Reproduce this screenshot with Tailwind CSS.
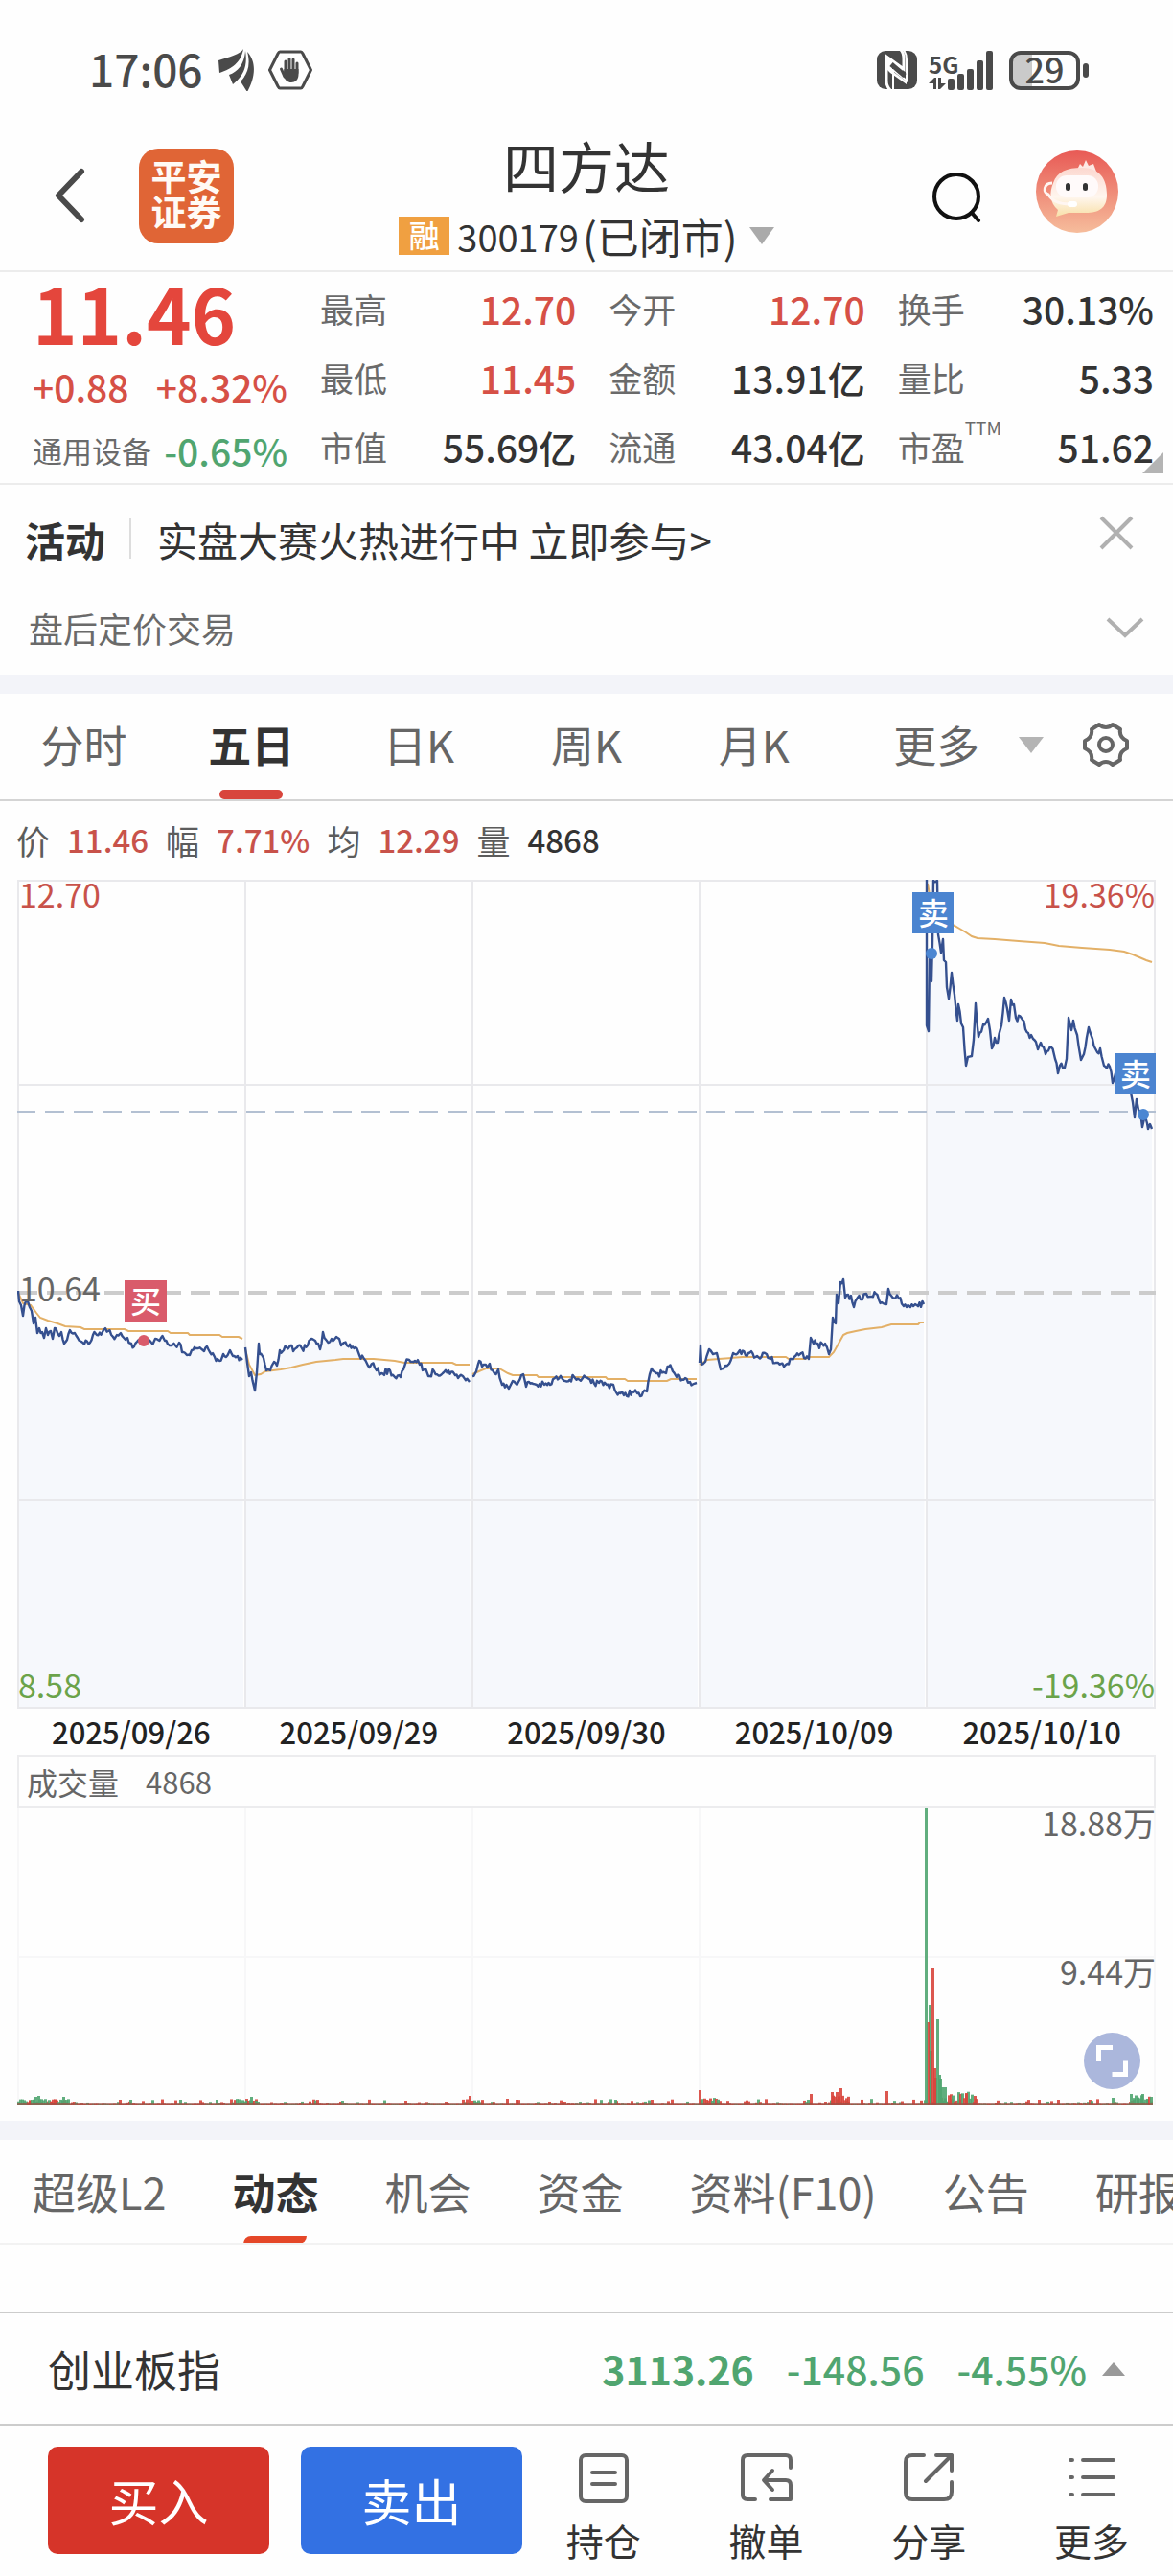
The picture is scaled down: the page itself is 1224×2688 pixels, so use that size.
<!DOCTYPE html>
<html lang="zh-CN">
<head>
    <meta charset="UTF-8">
    <meta name="viewport" content="width=device-width, initial-scale=1">
    <title>四方达 300179</title>
    <script src="https://cdn.jsdelivr.net/npm/@tailwindcss/browser@4"></script>
</head>
<body class="bg-[#fefefe] text-[#333333] font-['Noto_Sans_CJK_SC',sans-serif] overflow-x-hidden">
<div class="flex flex-col w-full">

    <!--status bar-->
    <div class="h-[130px] pt-4 pl-[93px] pr-[88px] flex items-center justify-between text-[#4a4a4a]">
        <div class="flex items-center">
            <span class="text-[46px] leading-[40px] font-medium pb-1">17:06</span>
            <svg class="ml-4 w-[38px] h-[44px]" viewBox="0 0 38 44" fill="currentColor">
                <path d="M26 0C24 5 10 9 0 12L1 25C10 22 23 17 26 0Z"/>
                <path d="M28 2C27 16 20 24 11 27L15 37C25 29 31 19 28 2Z"/>
                <path d="M30 3C34 17 30 27 23 34L30 45C36 34 42 16 30 3Z"/>
            </svg>
            <svg class="ml-3.5 w-[46px] h-[42px]" viewBox="0 0 46 42" fill="none" stroke="currentColor" stroke-linecap="round" stroke-linejoin="round">
                <path d="M12 2H34Q35 2 36 4L44 20Q45 21 44 22L36 38Q35 40 34 40H12Q11 40 10 38L2 22Q1 21 2 20L10 4Q11 2 12 2Z" stroke-width="3"/>
                <path d="M18 22V12M22 22V9.500M26 22V10M30 24V14M13.500 20L17 28" stroke-width="3"/>
                <path d="M16.500 20H31.500V26C31.500 31 28 34 24 34C20 34 18 32 15.500 27Z" fill="currentColor" stroke="none"/>
            </svg>
        </div>
        <div class="flex items-center">
            <svg class="w-[42px] h-[42px]" viewBox="0 0 42 42" fill="none" stroke="#fefefe" stroke-width="3">
                <rect x="0" y="1" width="42" height="40" rx="9" fill="#4a4a4a" stroke="none"/>
                <path d="M14 42C11 39 10 36 10 32V7L28 20V10C28 5 27 2 25 0"/>
                <path d="M17 42V20M17 21L31 32V10C31 6 30 3 28 0" stroke-width="2"/>
                <path d="M10 6L27 18V22L16 14V22L31 33V36L14 24L10 20Z" fill="#fefefe" stroke="none"/>
                <path d="M15 15L29 27" stroke="#4a4a4a" stroke-width="5"/>
            </svg>
            <div class="ml-3 flex items-end">
                <div class="flex flex-col w-[20px]">
                    <span class="text-[24px] leading-[26px] font-bold">5G</span>
                    <svg class="w-[18px] h-[14px]" viewBox="0 0 18 14" fill="#4a4a4a">
                        <path d="M0 7L6 1H8V13H5V7ZM10 1H13V7H18L12 13H10Z"/>
                    </svg>
                </div>
                <svg class="w-[48px] h-[42px]" viewBox="0 0 48 42" fill="#4a4a4a">
                    <rect x="0" y="30" width="7" height="12" rx="2"/>
                    <rect x="10" y="25" width="7" height="17" rx="2"/>
                    <rect x="20" y="20" width="7" height="22" rx="2"/>
                    <rect x="30" y="11" width="7" height="31" rx="2"/>
                    <rect x="40" y="1" width="7" height="41" rx="2"/>
                </svg>
            </div>
            <div class="ml-4 flex items-center gap-[3px]">
                <div class="w-[74px] h-[41px] rounded-[12px] border-4 border-[#4a4a4a] bg-linear-to-r from-[#cacaca] from-33% to-transparent to-33% bg-origin-border flex items-center justify-center">
                    <span class="text-[36px] leading-[30px] font-medium pb-1">29</span>
                </div>
                <div class="w-[6px] h-[15px] rounded-full bg-[#4a4a4a]"></div>
            </div>
        </div>
    </div>

    <!--header-->
    <header class="h-[154px] border-b-2 border-[#ececec] flex items-center">
        <div class="w-[280px] pl-[56px] pb-1 flex items-center gap-[56px]">
            <button aria-label="返回" class="cursor-pointer">
                <svg class="w-[33px] h-[58px]" viewBox="0 0 33 58" fill="none" stroke="#4a4a4a" stroke-width="6" stroke-linecap="round" stroke-linejoin="round">
                    <path d="M29 4L5 29L29 54"/>
                </svg>
            </button>
            <div class="w-[99px] h-[99px] rounded-[20px] bg-[#e06536] text-[#fffaf5] font-bold text-[37px] leading-[37px] flex flex-col items-center justify-center pb-1">
                <span>平安</span>
                <span>证券</span>
            </div>
        </div>
        <div class="flex-1 flex flex-col items-center">
            <h1 class="text-[58px] leading-[80px]">四方达</h1>
            <button class="h-[68px] flex items-center cursor-pointer">
                <span class="w-[53px] h-[40px] mr-2 bg-[#f0a041] text-white text-[32px] leading-[36px] font-medium">融</span>
                <span class="text-[38px]">300179</span>
                <span class="text-[44px] ml-1">(已闭市)</span>
                <svg class="ml-3 w-[26px] h-[18px]" viewBox="0 0 26 18"><path d="M0 0H26L13 18Z" fill="#aaaaaa"/></svg>
            </button>
        </div>
        <div class="w-[280px] pr-[57px] pb-1 flex items-center justify-end gap-[57px]">
            <button aria-label="搜索" class="cursor-pointer">
                <svg class="w-[52px] h-[56px]" viewBox="0 0 52 56" fill="none" stroke="#111111" stroke-width="4" stroke-linecap="round">
                    <circle cx="26" cy="29" r="23"/>
                    <path d="M42 46L49 54"/>
                </svg>
            </button>
            <button aria-label="客服" class="cursor-pointer mb-2">
                <svg class="w-[86px] h-[86px]" viewBox="0 0 86 86">
                    <defs>
                        <linearGradient id="avatar-bg" x1="0" y1="0" x2="0" y2="1">
                            <stop offset="0" stop-color="#e85a55"/>
                            <stop offset="1" stop-color="#f6bd9c"/>
                        </linearGradient>
                        <linearGradient id="avatar-face" x1="0" y1="0" x2="0" y2="1">
                            <stop offset="0" stop-color="#fcd8d0"/>
                            <stop offset="0.600" stop-color="#fff6ee"/>
                            <stop offset="1" stop-color="#f8e0a8"/>
                        </linearGradient>
                    </defs>
                    <circle cx="43" cy="43" r="43" fill="url(#avatar-bg)"/>
                    <path d="M43 20L46 14L49 17L52 10L55 16L60 14L63 22Z" fill="#fde9e4"/>
                    <path d="M18 34C22 22 32 18 48 18C66 18 74 29 74 46C74 60 66 65 52 65H34L21 69L23 62C14 54 14 44 18 34Z" fill="url(#avatar-face)"/>
                    <rect x="21" y="26" width="44" height="23" rx="11" fill="#fffafa"/>
                    <rect x="31" y="34" width="5" height="8" rx="2.500" fill="#333"/>
                    <rect x="49" y="34" width="5" height="8" rx="2.500" fill="#333"/>
                    <path d="M17 34C8 34 7 44 13 46C17 53 26 56 36 56" fill="none" stroke="#fff6f2" stroke-width="3"/>
                    <rect x="33" y="53" width="10" height="6" rx="3" fill="#fff"/>
                </svg>
            </button>
        </div>
    </header>

    <!--quote-->
    <section class="relative h-[222px] pt-[2px] px-5 border-b-2 border-[#ececec] grid grid-cols-[280px_1fr_1fr_1fr] gap-x-[34px] text-[39px] font-medium">
        <div class="pl-[14px] flex flex-col">
            <div class="h-[80px] flex items-center text-[79px] leading-[80px] font-bold text-[#e4463c]">11.46</div>
            <div class="h-[74px] flex items-center justify-between text-[#d65046]">
                <span>+0.88</span>
                <span>+8.32%</span>
            </div>
            <div class="h-[60px] flex items-center justify-between">
                <span class="text-[31px] font-normal text-[#6a6a6a]">通用设备</span>
                <span class="text-[#50a570]">-0.65%</span>
            </div>
        </div>
        <dl class="flex flex-col">
            <div class="h-[72px] flex items-center justify-between"><dt class="text-[35px] font-normal text-[#6a6a6a]">最高</dt><dd class="text-[#d65046]">12.70</dd></div>
            <div class="h-[72px] flex items-center justify-between"><dt class="text-[35px] font-normal text-[#6a6a6a]">最低</dt><dd class="text-[#d65046]">11.45</dd></div>
            <div class="h-[72px] flex items-center justify-between"><dt class="text-[35px] font-normal text-[#6a6a6a]">市值</dt><dd>55.69亿</dd></div>
        </dl>
        <dl class="flex flex-col">
            <div class="h-[72px] flex items-center justify-between"><dt class="text-[35px] font-normal text-[#6a6a6a]">今开</dt><dd class="text-[#d65046]">12.70</dd></div>
            <div class="h-[72px] flex items-center justify-between"><dt class="text-[35px] font-normal text-[#6a6a6a]">金额</dt><dd>13.91亿</dd></div>
            <div class="h-[72px] flex items-center justify-between"><dt class="text-[35px] font-normal text-[#6a6a6a]">流通</dt><dd>43.04亿</dd></div>
        </dl>
        <dl class="flex flex-col">
            <div class="h-[72px] flex items-center justify-between"><dt class="text-[35px] font-normal text-[#6a6a6a]">换手</dt><dd>30.13%</dd></div>
            <div class="h-[72px] flex items-center justify-between"><dt class="text-[35px] font-normal text-[#6a6a6a]">量比</dt><dd>5.33</dd></div>
            <div class="h-[72px] flex items-center justify-between">
                <dt class="flex items-start text-[35px] font-normal text-[#6a6a6a]">市盈<span class="text-[19px] leading-[12px]">TTM</span></dt>
                <dd>51.62</dd>
            </div>
        </dl>
        <svg class="absolute right-[10px] bottom-[10px] w-[22px] h-[22px]" viewBox="0 0 22 22"><path d="M22 0V22H0Z" fill="#b4b4b4"/></svg>
    </section>

    <!--activity-->
    <div class="h-[104px] pt-2 pl-[26px] pr-[40px] flex items-center text-[42px]">
        <span class="font-bold">活动</span>
        <span class="w-[2px] h-[42px] ml-[25px] mr-[27px] bg-[#dddddd]"></span>
        <a href="#" class="flex-1">实盘大赛火热进行中 立即参与&gt;</a>
        <button aria-label="关闭" class="mb-3 cursor-pointer">
            <svg class="w-[38px] h-[38px]" viewBox="0 0 38 38" stroke="#b0b0b0" stroke-width="4"><path d="M3 3L35 35M35 3L3 35"/></svg>
        </button>
    </div>
    <button class="h-[94px] pb-1 pl-[30px] pr-[30px] flex items-center justify-between cursor-pointer">
        <span class="text-[36px] text-[#6a6a6a]">盘后定价交易</span>
        <svg class="w-[40px] h-[24px]" viewBox="0 0 40 24" fill="none" stroke="#b0b0b0" stroke-width="4"><path d="M2 3L20 20L38 3"/></svg>
    </button>
    <div class="h-5 bg-[#f3f4f9]"></div>

    <!--period tabs-->
    <nav class="h-[112px] border-b-2 border-[#d4d4d4] grid grid-cols-7 text-[45px] text-[#666666]">
        <button class="pb-1 cursor-pointer">分时</button>
        <button class="relative pb-1 font-bold text-[#333333] cursor-pointer">五日
            <span class="absolute bottom-0 left-1/2 -translate-x-1/2 w-[66px] h-[10px] rounded-full bg-[#d8453c]"></span>
        </button>
        <button class="pb-1 cursor-pointer">日K</button>
        <button class="pb-1 cursor-pointer">周K</button>
        <button class="pb-1 cursor-pointer">月K</button>
        <div class="col-span-2 pb-1 pl-[58px] pr-[46px] flex items-center justify-between">
            <button class="cursor-pointer">更多</button>
            <svg class="w-[26px] h-[17px]" viewBox="0 0 26 17"><path d="M0 0H26L13 17Z" fill="#b4b4b4"/></svg>
            <button aria-label="设置" class="cursor-pointer">
                <svg class="w-[48px] h-[48px]" viewBox="0 0 48 48" fill="none" stroke="#666666" stroke-width="4" stroke-linejoin="round">
                    <path d="M17 3C21 7 27 7 31 3L39 8C38 14 41 18 46 20V28C41 30 38 34 39 40L31 45C27 41 21 41 17 45L9 40C10 34 7 30 2 28V20C7 18 10 14 9 8Z"/>
                    <circle cx="24" cy="24" r="7"/>
                </svg>
            </button>
        </div>
    </nav>

    <!--cursor values-->
    <div class="h-[82px] pl-[17px] flex items-center gap-[18px] text-[33px] font-medium text-[#c8524a]">
        <span class="text-[35px] font-normal text-[#5c5c5c]">价</span><span>11.46</span>
        <span class="text-[35px] font-normal text-[#5c5c5c]">幅</span><span>7.71%</span>
        <span class="text-[35px] font-normal text-[#5c5c5c]">均</span><span>12.29</span>
        <span class="text-[35px] font-normal text-[#5c5c5c]">量</span><span class="text-[#333333]">4868</span>
    </div>

    <!--price chart-->
    <div class="relative mx-[18px] text-[34px] leading-[30px]">
        <svg id="price-chart" class="block w-full" viewBox="18 918 1188 865" fill="none">
            <g id="price-fill" fill="#f6f8fc"></g>
            <path d="M19 918V1783M256 918V1783M493 918V1783M730 918V1783M967 918V1783M1205 918V1783M18 919H1206M18 1132H1206M18 1565H1206M18 1782H1206" stroke="#e9e9ec" stroke-width="2"/>
            <path d="M19 1349H1206" stroke="#cccccc" stroke-width="4" stroke-dasharray="20 10"/>
            <path d="M17 1160H1206" stroke="#b3c0d2" stroke-width="2" stroke-dasharray="20 10"/>
            <g id="price-avg" stroke="#e3b067" stroke-width="2"></g>
            <g id="price-line" stroke="#35508f" stroke-width="2.400" stroke-linejoin="round"></g>
            <circle cx="150" cy="1399" r="6" fill="#d95b6b"/>
            <circle cx="972" cy="995" r="6" fill="#4b86d2"/>
            <circle cx="1193" cy="1163" r="6" fill="#4b86d2"/>
            <rect x="130" y="1336" width="44" height="43" fill="#d95b6b"/>
            <rect x="952" y="931" width="43" height="43" fill="#4b84d0"/>
            <rect x="1163" y="1099" width="43" height="43" fill="#4b84d0"/>
            <g fill="#ffffff" font-size="32" font-weight="500" text-anchor="middle">
                <text x="152" y="1370">买</text>
                <text x="974" y="965">卖</text>
                <text x="1185" y="1133">卖</text>
            </g>
        </svg>
        <span class="absolute top-0 left-[2px] text-[#c8524a]">12.70</span>
        <span class="absolute top-0 right-[1px] text-[#c8524a]">19.36%</span>
        <span class="absolute bottom-1/2 left-[2px] translate-y-2 text-[#666666]">10.64</span>
        <span class="absolute bottom-[10px] left-[1px] text-[#6ba34a]">8.58</span>
        <span class="absolute bottom-[10px] right-[1px] text-[#6ba34a]">-19.36%</span>
    </div>
    <div class="h-[48px] mx-[18px] grid grid-cols-5 items-center text-center text-[31px] leading-[40px] font-medium text-[#222222]">
        <span>2025/09/26</span>
        <span>2025/09/29</span>
        <span>2025/09/30</span>
        <span>2025/10/09</span>
        <span>2025/10/10</span>
    </div>

    <!--volume chart-->
    <div class="h-[56px] mx-[18px] px-[8px] border-2 border-[#ececee] flex items-center gap-[28px] text-[#666666]">
        <span class="text-[32px] leading-[40px]">成交量</span>
        <span class="text-[31px] leading-[40px]">4868</span>
    </div>
    <div class="relative mx-[18px] mb-[17px] text-[34px] leading-[30px] text-[#666666]">
        <svg id="volume-chart" class="block w-full" viewBox="18 1887 1188 309">
            <path d="M19 1887V2196M256 1887V2196M493 1887V2196M730 1887V2196M967 1887V2196M1205 1887V2196M18 2042H1206" stroke="#f7f7f8" stroke-width="2"/>
            <g id="volume-bars"></g>
            <path d="M18 2195H1203" stroke="#9a5046" stroke-width="2" stroke-opacity="0.700"/>
        </svg>
        <span class="absolute top-0 right-0">18.88万</span>
        <span class="absolute top-1/2 right-0">9.44万</span>
        <button aria-label="全屏" class="absolute right-[16px] bottom-[16px] cursor-pointer">
            <svg class="w-[59px] h-[59px]" viewBox="0 0 59 59">
                <circle cx="29.500" cy="29.500" r="29.500" fill="#abb7dc"/>
                <path d="M15.500 30V15.500H30M29.500 43.500H43.500V29.500" fill="none" stroke="#ffffff" stroke-width="5"/>
            </svg>
        </button>
    </div>
    <div class="h-5 bg-[#f3f4f9]"></div>

    <!--info tabs-->
    <nav class="h-[110px] pl-[34px] border-b-2 border-[#f2f2f2] flex items-stretch gap-[69px] text-[45px] text-[#666666] whitespace-nowrap overflow-hidden">
        <button class="shrink-0 cursor-pointer">超级L2</button>
        <button class="relative shrink-0 font-bold text-[#333333] cursor-pointer">动态
            <span class="absolute bottom-0 left-1/2 -translate-x-1/2 w-[66px] h-[8px] rounded-tl-lg rounded-br-lg bg-[#e54728]"></span>
        </button>
        <button class="shrink-0 cursor-pointer">机会</button>
        <button class="shrink-0 cursor-pointer">资金</button>
        <button class="shrink-0 cursor-pointer">资料(F10)</button>
        <button class="shrink-0 cursor-pointer">公告</button>
        <button class="shrink-0 cursor-pointer">研报</button>
    </nav>

    <!--index row-->
    <div class="h-[117px] mt-[69px] pl-[50px] pr-[50px] border-t-2 border-[#cccccc] flex items-center text-[41px] font-medium text-[#50a570]">
        <span class="flex-1 text-[45px] font-normal text-[#333333]">创业板指</span>
        <span class="font-bold">3113.26</span>
        <span class="ml-[34px]">-148.56</span>
        <span class="ml-[34px]">-4.55%</span>
        <svg class="ml-4 w-[24px] h-[14px]" viewBox="0 0 24 14"><path d="M12 0L24 14H0Z" fill="#999999"/></svg>
    </div>

    <!--bottom bar-->
    <footer class="h-[158px] pl-[50px] border-t-2 border-[#cccccc] flex items-start">
        <button class="w-[231px] h-[112px] mt-[22px] rounded-[10px] bg-[#d63429] text-white text-[52px] cursor-pointer">买入</button>
        <button class="w-[231px] h-[112px] mt-[22px] ml-[33px] rounded-[10px] bg-[#3371e3] text-white text-[52px] cursor-pointer">卖出</button>
        <div class="flex-1 pt-[29px] grid grid-cols-4 text-[39px] leading-[56px] text-[#333333]">
            <button class="flex flex-col items-center gap-[10px] cursor-pointer">
                <svg class="w-[52px] h-[52px]" viewBox="0 0 52 52" fill="none" stroke="#666666" stroke-width="4" stroke-linecap="round">
                    <rect x="2" y="2" width="48" height="48" rx="5"/>
                    <path d="M14 20H38M14 32H38"/>
                </svg>
                持仓
            </button>
            <button class="flex flex-col items-center gap-[10px] cursor-pointer">
                <svg class="w-[54px] h-[52px]" viewBox="0 0 54 52" fill="none" stroke="#666666" stroke-width="4" stroke-linecap="round" stroke-linejoin="round">
                    <path d="M52 15V7Q52 2 47 2H7Q2 2 2 7V43Q2 48 7 48H15M31 48H52V33Q52 28 47 28H25M33 18L24 28L33 38"/>
                </svg>
                撤单
            </button>
            <button class="flex flex-col items-center gap-[10px] cursor-pointer">
                <svg class="w-[52px] h-[52px]" viewBox="0 0 52 52" fill="none" stroke="#666666" stroke-width="4" stroke-linecap="round" stroke-linejoin="round">
                    <path d="M21 2H9Q2 2 2 9V41Q2 48 9 48H42Q50 48 50 40V30M34 2H50V18M50 2L23 29"/>
                </svg>
                分享
            </button>
            <button class="flex flex-col items-center gap-[10px] cursor-pointer">
                <svg class="w-[52px] h-[52px]" viewBox="0 0 52 52" fill="none" stroke="#666666" stroke-width="4" stroke-linecap="round">
                    <path d="M4 7H6M17 7H49M4 25H6M17 25H49M4 43H6M17 43H49"/>
                </svg>
                更多
            </button>
        </div>
    </footer>
</div>

<script>
    const NS = 'http://www.w3.org/2000/svg';

    // one "x,y x,y ..." list per trading day
    const priceDays = [
        '19,1347 20,1358 22,1362 24,1373 27,1358 29,1358 31,1364 33,1368 35,1381 37,1375 39,1391 41,1386 44,1390 46,1396 48,1386 50,1393 53,1389 55,1397 57,1386 60,1391 62,1394 64,1390 67,1402 70,1398 73,1388 78,1391 81,1396 85,1400 94,1401 97,1393 101,1393 108,1388 110,1386 113,1389 118,1395 122,1393 126,1391 131,1398 133,1396 137,1402 140,1405 143,1400 150,1397 158,1401 162,1397 168,1396 172,1399 177,1404 183,1404 187,1401 190,1411 195,1414 200,1409 207,1407 213,1410 216,1405 219,1411 224,1416 229,1420 233,1413 236,1416 240,1409 243,1415 248,1415 253,1419',
        '256,1406 258,1422 260,1436 262,1432 266,1451 268,1432 270,1402 271,1413 275,1417 278,1430 282,1430 286,1421 289,1425 292,1409 296,1409 299,1406 303,1404 306,1410 310,1406 315,1407 321,1404 325,1397 329,1399 334,1408 337,1390 341,1399 346,1397 351,1395 356,1404 362,1404 371,1406 375,1414 380,1418 384,1425 388,1423 393,1430 398,1433 407,1430 412,1437 418,1437 423,1423 427,1419 433,1420 438,1424 443,1429 447,1436 453,1431 462,1433 468,1430 475,1435 483,1436 490,1442',
        '493,1436 497,1431 500,1420 503,1426 507,1424 511,1423 516,1433 520,1429 524,1445 531,1449 535,1441 541,1442 546,1434 549,1447 552,1442 560,1445 568,1445 574,1445 579,1438 587,1439 600,1438 608,1438 617,1443 625,1443 633,1445 640,1445 643,1453 651,1456 660,1452 665,1454 668,1457 675,1452 678,1434 680,1428 685,1433 695,1433 698,1426 702,1431 706,1437 715,1438 720,1442 727,1443',
        '730,1422 731,1404 732,1424 736,1421 740,1408 744,1413 748,1412 752,1429 757,1425 761,1423 765,1412 772,1409 781,1412 790,1415 800,1413 804,1418 812,1422 820,1424 826,1418 836,1412 844,1418 846,1396 852,1403 863,1406 865,1413 867,1408 869,1375 872,1381 873,1351 875,1360 877,1338 880,1335 882,1354 888,1352 891,1364 895,1354 900,1356 904,1350 908,1353 914,1350 920,1359 925,1361 927,1345 930,1352 938,1355 943,1363 950,1364 955,1361 964,1361',
        '967,918 967,1070 969,1076 970,1000 972,1024 973,985 974,919 978,919 979,975 982,994 984,980 985,1002 987,1004 988,1030 990,1042 993,1015 996,1038 999,1065 1000,1048 1003,1068 1005,1072 1008,1112 1010,1103 1014,1102 1016,1085 1018,1047 1021,1082 1026,1069 1031,1063 1033,1075 1035,1094 1038,1083 1041,1088 1045,1070 1048,1041 1053,1065 1055,1043 1058,1048 1060,1062 1067,1064 1073,1078 1078,1084 1083,1095 1086,1088 1091,1100 1097,1093 1101,1105 1104,1120 1106,1112 1111,1114 1113,1105 1115,1062 1118,1075 1120,1065 1124,1080 1128,1106 1131,1100 1136,1072 1140,1084 1145,1098 1148,1094 1152,1112 1158,1113 1161,1130 1164,1120 1175,1130 1180,1140 1182,1150 1184,1166 1186,1147 1188,1158 1190,1160 1192,1176 1195,1165 1197,1172 1198,1178 1200,1173 1202,1178'
    ];
    const avgDays = [
        '19,1349 24,1360 32,1362 38,1370 42,1375 50,1378 60,1381 68,1384 84,1385 88,1387 130,1387 134,1389 175,1389 178,1391 196,1391 198,1393 229,1393 232,1395 249,1395 253,1397',
        '256,1408 260,1424 266,1435 272,1434 277,1431 293,1429 304,1427 316,1424 330,1421 350,1419 358,1418 390,1418 412,1420 422,1422 472,1422 476,1424 490,1424',
        '493,1434 502,1430 507,1428 521,1428 530,1433 535,1435 560,1435 562,1437 632,1437 634,1439 652,1439 655,1441 696,1441 700,1439 727,1439',
        '730,1424 738,1419 750,1418 775,1416 820,1416 823,1418 840,1418 845,1416 865,1416 870,1411 875,1402 880,1393 884,1391 893,1389 903,1387 920,1385 930,1382 958,1382 960,1380 964,1380',
        '968,922 972,945 982,960 996,966 1003,970 1008,973 1014,977 1020,979 1038,980 1063,982 1090,984 1105,987 1129,989 1158,991 1173,993 1182,996 1189,999 1196,1002 1202,1004'
    ];

    let seed = 7;
    function rand() {
        seed = (seed * 16807) % 2147483647;
        return seed / 2147483647;
    }

    function add(parent, tag, attrs) {
        const el = document.createElementNS(NS, tag);
        for (const key in attrs) el.setAttribute(key, attrs[key]);
        document.getElementById(parent).appendChild(el);
    }

    // minute ticks between the stored points
    function withTicks(list) {
        const pts = list.split(' ').map(p => p.split(',').map(Number));
        const out = [];
        pts.forEach((p, i) => {
            out.push(p);
            const next = pts[i + 1];
            if (!next) return;
            for (let x = p[0] + 1.5; x < next[0] - 1; x += 1.5) {
                const t = (x - p[0]) / (next[0] - p[0]);
                out.push([x, p[1] + (next[1] - p[1]) * t + (rand() - 0.5) * 7]);
            }
        });
        return out;
    }

    priceDays.forEach(day => {
        const pts = withTicks(day);
        const line = pts.map(p => p.join(',')).join(' ');
        const last = pts[pts.length - 1][0] + 1;
        add('price-fill', 'polygon', {points: pts[0][0] + ',1782 ' + line + ' ' + last + ',1782'});
        add('price-line', 'polyline', {points: line});
    });
    avgDays.forEach(day => add('price-avg', 'polyline', {points: day}));

    const RED = '#d8453c';
    const GREEN = '#50a570';

    function bar(x, height, color) {
        add('volume-bars', 'rect', {x: x, y: 2196 - height, width: 3, height: height, fill: color, 'fill-opacity': 0.9});
    }

    for (let x = 18; x < 1202; x += 2) {
        bar(x, 1 + Math.pow(rand(), 6) * 5, rand() > 0.4 ? RED : GREEN);
    }
    // busy minutes: from, to, max height, share of red
    [[18, 72, 4, 0.4], [240, 270, 4, 0.4], [484, 504, 4, 0.5], [730, 750, 5, 0.7], [866, 886, 8, 0.8], [981, 1018, 12, 0.5], [1178, 1202, 8, 0.2]].forEach(([from, to, max, red]) => {
        for (let x = from; x < to; x += 2) bar(x, 2 + rand() * max, rand() < red ? RED : GREEN);
    });
    [[36, 8, GREEN], [39, 9, GREEN], [65, 8, GREEN], [124, 5, RED], [135, 5, GREEN], [187, 5, GREEN], [225, 5, GREEN], [261, 8, GREEN], [489, 9, RED], [528, 6, RED],
        [641, 5, GREEN], [679, 5, RED], [729, 15, RED], [845, 11, RED], [867, 13, RED], [872, 13, RED], [876, 17, RED], [924, 14, RED],
        [969, 104, GREEN], [967, 86, RED], [970, 56, GREEN], [972, 142, RED], [974, 38, RED], [975, 28, RED], [977, 89, GREEN], [979, 31, GREEN], [980, 27, GREEN],
        [982, 18, GREEN], [985, 18, GREEN], [965, 309, GREEN], [1007, 12, RED], [1016, 9, RED], [1083, 5, RED], [1103, 5, RED], [1160, 7, GREEN], [1179, 11, GREEN], [1191, 11, GREEN], [1200, 8, GREEN]
    ].forEach(b => bar(b[0], b[1], b[2]));
</script>
</body>
</html>
